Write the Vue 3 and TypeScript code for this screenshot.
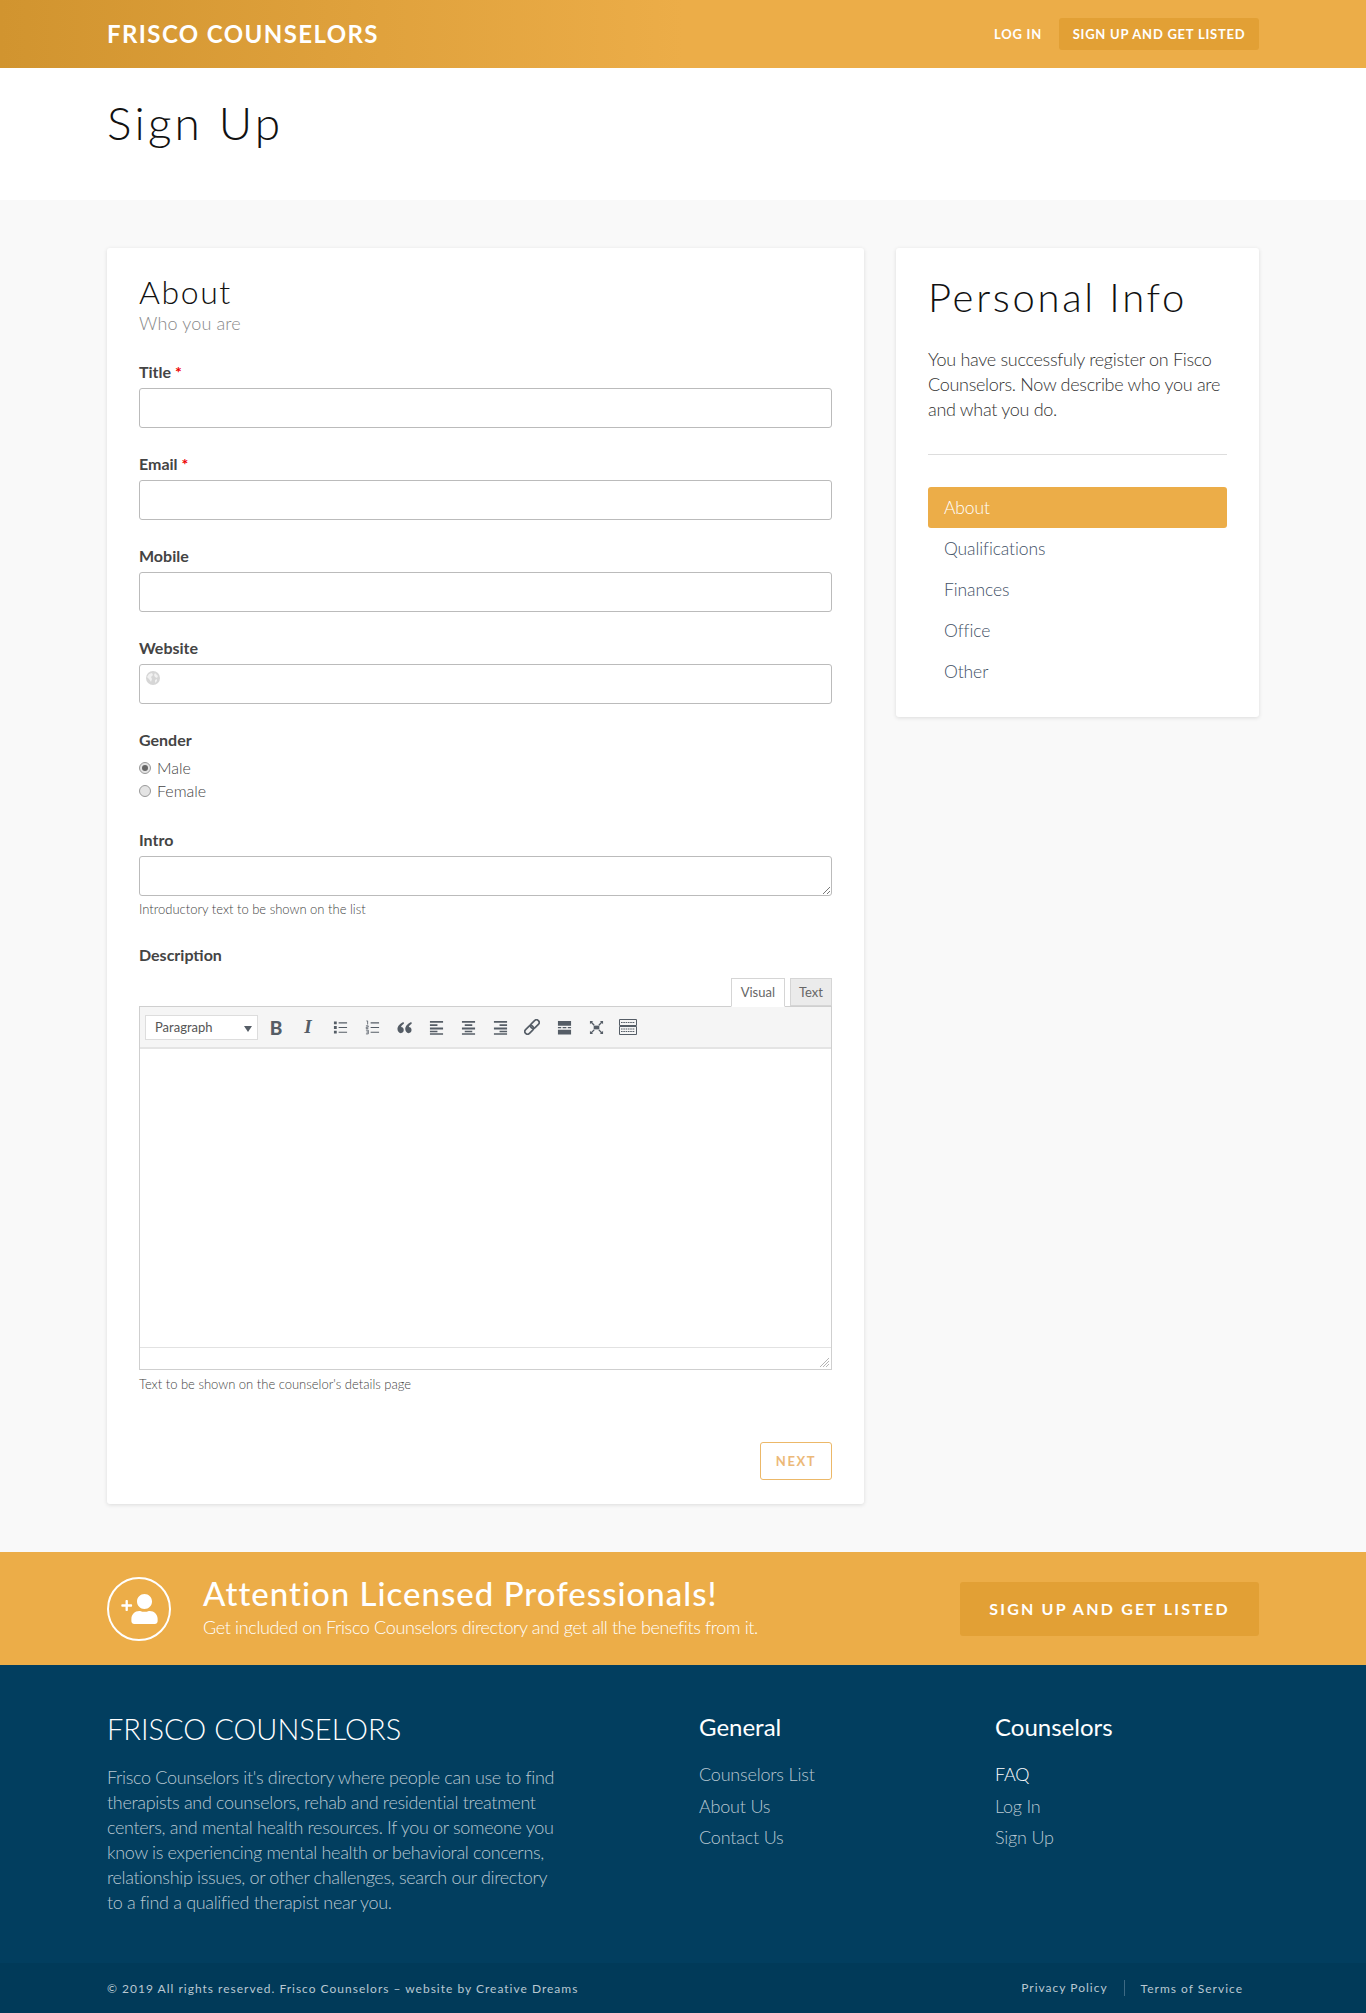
<template>
  <div class="page">
    <header class="topbar">
      <div class="wrap topbar-inner">
        <a class="brand">FRISCO COUNSELORS</a>
        <nav class="topnav">
          <a class="login">LOG IN</a>
          <a class="listed">SIGN UP AND GET LISTED</a>
        </nav>
      </div>
    </header>

    <section class="title-band">
      <div class="wrap"><h1>Sign Up</h1></div>
    </section>

    <main class="content">
      <div class="wrap columns">
        <form class="card form-card" @submit.prevent>
          <h2>About</h2>
          <p class="sub">Who you are</p>

          <div v-for="f in fields" :key="f.label" class="field">
            <label>{{ f.label }} <span v-if="f.required" class="req">*</span></label>
            <div class="input">
              <svg v-if="f.globe" class="globe" viewBox="0 0 14 14">
                <circle cx="7" cy="7" r="7" fill="#d6d6d6" />
                <path d="M3 3l3-1 1 2-2 2 1 2-1 3-2-3-2-2zM9 2l3 3-1 2-2-1-1-2zM9 9l2-1 0 2-2 2z" fill="#f1f1f1" />
              </svg>
            </div>
          </div>

          <div class="field gender">
            <label>Gender</label>
            <div class="radio first"><span class="dot on" />Male</div>
            <div class="radio"><span class="dot" />Female</div>
          </div>

          <div class="field intro">
            <label>Intro</label>
            <div class="input">
              <svg class="grip" viewBox="0 0 8 8"><path d="M8 1L1 8M8 5L5 8" stroke="#777" fill="none" /></svg>
            </div>
            <p class="hint">Introductory text to be shown on the list</p>
          </div>

          <div class="field desc">
            <label>Description</label>
            <div class="tabs">
              <span class="tab active">Visual</span>
              <span class="tab">Text</span>
            </div>
            <div class="editor">
              <div class="toolbar">
                <div class="select">Paragraph<i class="caret" /></div>
                <span class="tool"><span class="t-b">B</span></span>
                <span class="tool"><span class="t-i">I</span></span>
                <span class="tool">
                  <svg viewBox="0 0 16 16" class="ico"><path d="M1 1.500h3v3H1zM1 6.500h3v3H1zM1 11.500h3v3H1z" fill="#555d66" /><path d="M6 3h9M6 8h9M6 13h9" stroke="#555d66" stroke-width="1.200" /></svg>
                </span>
                <span class="tool">
                  <svg viewBox="0 0 16 16" class="ico"><path d="M1.500 1h1.300v3.800M1 6.200h2.400v1.500H1.300v1.500h2.300M1 10.800h2.500v4H1M1.500 12.800h2" stroke="#555d66" stroke-width=".9" fill="none" /><path d="M6 3h9M6 8h9M6 13h9" stroke="#555d66" stroke-width="1.200" /></svg>
                </span>
                <span class="tool">
                  <svg viewBox="0 0 16 16" class="ico"><path d="M7 2C3.500 3.500.5 6.200.5 9.700.5 12 2 14 4 14s3.200-1.500 3.200-3.300S6 7.500 4.300 7.500C4.700 6 5.800 5 7.400 4zM15.300 2C11.800 3.500 8.800 6.200 8.800 9.700c0 2.300 1.500 4.300 3.500 4.300s3.200-1.500 3.200-3.300-1.200-3.200-2.900-3.200c.4-1.500 1.500-2.500 3.100-3.500z" fill="#555d66" /></svg>
                </span>
                <span class="tool">
                  <svg viewBox="0 0 16 16" class="ico"><path d="M1 1h14v2H1zM1 4.500h8v2H1zM1 8h14v2H1zM1 11.500h8v1.500H1zM1 14h14v1.800H1z" fill="#555d66" /></svg>
                </span>
                <span class="tool">
                  <svg viewBox="0 0 16 16" class="ico"><path d="M1 1h14v2H1zM4 4.500h8v2H4zM1 8h14v2H1zM4 11.500h8v1.500H4zM1 14h14v1.800H1z" fill="#555d66" /></svg>
                </span>
                <span class="tool">
                  <svg viewBox="0 0 16 16" class="ico"><path d="M1 1h14v2H1zM7 4.500h8v2H7zM1 8h14v2H1zM7 11.500h8v1.500H7zM1 14h14v1.800H1z" fill="#555d66" /></svg>
                </span>
                <span class="tool">
                  <svg viewBox="0 0 16 16" class="ico link">
                    <g transform="rotate(-45 8 8)" fill="none" stroke="#555d66" stroke-width="1.700">
                      <rect x="-1" y="5.300" width="10" height="5.400" rx="2.700" />
                      <rect x="7" y="5.300" width="10" height="5.400" rx="2.700" />
                    </g>
                  </svg>
                </span>
                <span class="tool">
                  <svg viewBox="0 0 16 16" class="ico"><path d="M1 1h14v5H1zM1 10.500h14v5H1z" fill="#555d66" /><path d="M1 8.200h3.500M6 8.200h4M11.500 8.200H15" stroke="#555d66" stroke-width="1.300" /></svg>
                </span>
                <span class="tool">
                  <svg viewBox="0 0 16 16" class="ico"><path d="M5 6h6v4H5z" fill="#555d66" /><path d="M1 1h3.500L3.300 2.200 6 5 5 6 2.200 3.300 1 4.500zM15 1v3.500l-1.200-1.200L11 6l-1-1 2.800-2.800L11.500 1zM1 15v-3.500l1.200 1.200L5 10l1 1-2.800 2.800L4.500 15zM15 15h-3.500l1.200-1.200L10 11l1-1 2.800 2.800 1.200-1.300z" fill="#555d66" /></svg>
                </span>
                <span class="tool">
                  <svg viewBox="0 0 18 16" class="ico kb"><path d="M.5.500h17v6H.5zM.5 7.500h17v8H.5z" fill="none" stroke="#555d66" /><path d="M2 3.500h14M2 10h14M2 12.500h14" stroke="#555d66" stroke-width="1.200" stroke-dasharray="1.600 .7" /></svg>
                </span>
              </div>
              <div class="edit-area" />
              <div class="statusbar">
                <svg class="resize" viewBox="0 0 10 10"><path d="M10 1L1 10M10 4L4 10M10 7L7 10" stroke="#b5b5b5" fill="none" /></svg>
              </div>
            </div>
            <p class="hint">Text to be shown on the counselor's details page</p>
          </div>

          <div class="actions"><button type="button" class="next">NEXT</button></div>
        </form>

        <aside class="card side-card">
          <h2>Personal Info</h2>
          <p class="lead">You have successfuly register on Fisco Counselors. Now describe who you are and what you do.</p>
          <hr />
          <ul>
            <li v-for="(s, i) in steps" :key="s" :class="{ active: i === 0 }">{{ s }}</li>
          </ul>
        </aside>
      </div>
    </main>

    <section class="cta">
      <div class="wrap cta-inner">
        <div class="cta-icon">
          <svg viewBox="0 0 640 512" width="38" height="30">
            <path fill="#fff" d="M224 256c70.700 0 128-57.300 128-128S294.700 0 224 0 96 57.300 96 128s57.300 128 128 128zm89.600 32h-16.700c-22.200 10.200-46.900 16-72.900 16s-50.600-5.800-72.900-16h-16.700C60.200 288 0 348.200 0 422.400V464c0 26.500 21.500 48 48 48h352c26.500 0 48-21.500 48-48v-41.600c0-74.200-60.200-134.400-134.400-134.400z" transform="translate(190 0)" />
            <path fill="#fff" d="M190 176h-60v-60c0-6.600-5.400-12-12-12h-16c-6.600 0-12 5.400-12 12v60H30c-6.600 0-12 5.400-12 12v16c0 6.600 5.400 12 12 12h60v60c0 6.600 5.400 12 12 12h16c6.600 0 12-5.400 12-12v-60h60c6.600 0 12-5.400 12-12v-16c0-6.600-5.400-12-12-12z" />
          </svg>
        </div>
        <div class="cta-text">
          <h3>Attention Licensed Professionals!</h3>
          <p>Get included on Frisco Counselors directory and get all the benefits from it.</p>
        </div>
        <a class="cta-btn">SIGN UP AND GET LISTED</a>
      </div>
    </section>

    <footer class="footer">
      <div class="wrap footer-main">
        <div class="f-about">
          <h4>FRISCO COUNSELORS</h4>
          <p>Frisco Counselors it's directory where people can use to find therapists and counselors, rehab and residential treatment centers, and mental health resources. If you or someone you know is experiencing mental health or behavioral concerns, relationship issues, or other challenges, search our directory to a find a qualified therapist near you.</p>
        </div>
        <div class="f-col">
          <h5>General</h5>
          <a v-for="l in generalLinks" :key="l">{{ l }}</a>
        </div>
        <div class="f-col last">
          <h5>Counselors</h5>
          <a v-for="(l, i) in counselorLinks" :key="l" :class="{ lit: i === 0 }">{{ l }}</a>
        </div>
      </div>
      <div class="footer-bottom">
        <div class="wrap bottom-inner">
          <span>© 2019 All rights reserved. Frisco Counselors – website by Creative Dreams</span>
          <span class="legal"><a>Privacy Policy</a><a>Terms of Service</a></span>
        </div>
      </div>
    </footer>
  </div>
</template>

<script setup lang="ts">
interface Field {
  label: string
  required?: boolean
  globe?: boolean
}

const fields: Field[] = [
  { label: 'Title', required: true },
  { label: 'Email', required: true },
  { label: 'Mobile' },
  { label: 'Website', globe: true }
]

const steps = ['About', 'Qualifications', 'Finances', 'Office', 'Other']
const generalLinks = ['Counselors List', 'About Us', 'Contact Us']
const counselorLinks = ['FAQ', 'Log In', 'Sign Up']
</script>

<style>
body {
  margin: 0;
}
</style>

<style scoped>
.page {
  font-family: 'Lato', 'Noto Sans', sans-serif;
  background: #f9f9f9;
  color: #444;
}

.wrap {
  width: 1152px;
  margin: 0 auto;
}

.topbar {
  height: 68px;
  background: linear-gradient(90deg, #d1942f 0%, #ecad48 50%);
}

.topbar-inner {
  height: 68px;
  display: flex;
  align-items: center;
  justify-content: space-between;
}

.brand {
  font-size: 24px;
  font-weight: 700;
  color: #fff;
  letter-spacing: 1.400px;
  padding-bottom: 2px;
}

.topnav {
  display: flex;
  align-items: center;
}

.login,
.listed {
  font-size: 13px;
  font-weight: 700;
  color: #fff;
  letter-spacing: 0.750px;
}

.login {
  margin-right: 17px;
}

.listed {
  width: 200px;
  text-align: center;
  height: 32px;
  line-height: 32px;
  background: #e2a035;
  border-radius: 3px;
}

.title-band {
  height: 132px;
  background: #fff;
}

h1 {
  margin: 0;
  padding-top: 30px;
  font-size: 46px;
  line-height: 50px;
  font-weight: 300;
  letter-spacing: 3.200px;
  color: #111;
}

.content {
  padding: 48px 0;
}

.columns {
  display: flex;
  align-items: flex-start;
  gap: 32px;
}

.card {
  background: #fff;
  border-radius: 3px;
  box-shadow: 0 1px 4px rgba(0, 0, 0, 0.12);
  box-sizing: border-box;
}

.form-card {
  width: 757px;
  padding: 26px 32px 24px;
}

h2 {
  margin: 0;
  font-weight: 300;
  color: #111;
}

.form-card h2 {
  font-size: 32px;
  line-height: 36px;
  letter-spacing: 1.600px;
}

.sub {
  margin: 1px 0 25px;
  font-size: 18px;
  line-height: 24px;
  font-weight: 300;
  letter-spacing: 0.150px;
  color: #888;
}

.field {
  margin-bottom: 24px;
}

label {
  display: block;
  font-size: 16px;
  line-height: 24px;
  font-weight: 700;
  color: #444;
}

.req {
  color: #e00;
}

.input {
  position: relative;
  height: 40px;
  margin-top: 4px;
  box-sizing: border-box;
  background: #fff;
  border: 1px solid #bbb;
  border-radius: 3px;
}

.globe {
  position: absolute;
  left: 6px;
  top: 6px;
  width: 14px;
  height: 14px;
}

.grip {
  position: absolute;
  right: 1px;
  bottom: 1px;
  width: 8px;
  height: 8px;
}

.gender {
  margin-bottom: 26px;
}

.radio {
  display: flex;
  align-items: center;
  height: 23px;
  font-size: 16px;
  font-weight: 300;
  color: #444;
}

.radio.first {
  margin-top: 4px;
}

.dot {
  width: 10px;
  height: 10px;
  margin-right: 6px;
  border: 1px solid #999;
  border-radius: 50%;
  background: #e4e4e4;
  position: relative;
}

.dot.on::after {
  content: '';
  position: absolute;
  left: 2px;
  top: 2px;
  width: 6px;
  height: 6px;
  border-radius: 50%;
  background: #666;
}

.hint {
  margin: 4px 0 0;
  font-size: 13px;
  line-height: 18px;
  font-weight: 300;
  color: #444;
}

.intro {
  margin-bottom: 25px;
}

.desc {
  margin-bottom: 0;
}

.desc .hint {
  margin-top: 5px;
}

.tabs {
  display: flex;
  justify-content: flex-end;
  gap: 5px;
  margin-top: 11px;
  height: 29px;
  position: relative;
  z-index: 1;
  margin-bottom: -1px;
}

.tab {
  box-sizing: border-box;
  padding: 0 8px;
  height: 28px;
  line-height: 26px;
  font-size: 13px;
  font-weight: 400;
  color: #666;
  background: #ebebeb;
  border: 1px solid #d5d5d5;
}

.tab.active {
  height: 29px;
  padding: 0 9px;
  background: #fff;
  border-bottom-color: #fff;
}

.editor {
  border: 1px solid #cfcfcf;
}

.toolbar {
  display: flex;
  align-items: center;
  height: 42px;
  box-sizing: border-box;
  padding: 0 5px;
  background: #f5f5f5;
  border-bottom: 2px solid #e4e4e4;
}

.select {
  position: relative;
  box-sizing: border-box;
  width: 113px;
  height: 25px;
  line-height: 22px;
  padding-left: 9px;
  margin-right: 2px;
  font-size: 13px;
  color: #555;
  background: #fff;
  border: 1px solid #ddd;
}

.caret {
  position: absolute;
  right: 5px;
  top: 10px;
  border-left: 4px solid transparent;
  border-right: 4px solid transparent;
  border-top: 6px solid #555d66;
}

.tool {
  width: 32px;
  display: flex;
  align-items: center;
  justify-content: center;
  color: #555d66;
}

.ico {
  width: 15px;
  height: 15px;
}

.ico.link {
  width: 16px;
  height: 16px;
}

.ico.kb {
  width: 18px;
  height: 16px;
}

.t-b {
  font-size: 19px;
  font-weight: 900;
}

.t-i {
  font-family: 'Liberation Serif', serif;
  font-size: 19px;
  font-weight: 700;
  font-style: italic;
}

.edit-area {
  height: 298px;
  background: #fff;
}

.statusbar {
  position: relative;
  height: 21px;
  border-top: 1px solid #e2e2e2;
  background: #fff;
}

.resize {
  position: absolute;
  right: 2px;
  bottom: 2px;
  width: 10px;
  height: 10px;
}

.actions {
  display: flex;
  justify-content: flex-end;
  margin-top: 49px;
}

.next {
  box-sizing: border-box;
  width: 72px;
  height: 38px;
  font-family: inherit;
  font-size: 13px;
  font-weight: 700;
  letter-spacing: 1.600px;
  color: #ecb978;
  background: #fff;
  border: 1px solid #ecb868;
  border-radius: 3px;
}

.side-card {
  width: 363px;
  padding: 26px 32px 25px;
}

.side-card h2 {
  font-size: 40px;
  line-height: 46px;
  letter-spacing: 2.700px;
  margin-bottom: 27px;
}

.lead {
  margin: 0;
  font-size: 18px;
  line-height: 25px;
  font-weight: 300;
  letter-spacing: -0.300px;
  color: #333;
}

hr {
  border: 0;
  border-top: 1px solid #ddd;
  margin: 32px 0;
}

ul {
  list-style: none;
  margin: 0;
  padding: 0;
}

li {
  height: 41px;
  line-height: 41px;
  padding-left: 16px;
  font-size: 17.500px;
  font-weight: 300;
  letter-spacing: -0.100px;
  color: #3f5166;
  border-radius: 3px;
}

li.active {
  background: #ecad48;
  color: #fff;
}

.cta {
  height: 113px;
  background: #ecad48;
  color: #fff;
}

.cta-inner {
  height: 113px;
  display: flex;
  align-items: center;
}

.cta-icon {
  box-sizing: border-box;
  width: 64px;
  height: 64px;
  margin-right: 32px;
  display: flex;
  align-items: center;
  justify-content: center;
  border: 2px solid #fff;
  border-radius: 50%;
}

.cta-text {
  flex: 1;
  padding-bottom: 4px;
}

h3 {
  margin: 0 0 4px;
  font-size: 33px;
  line-height: 36px;
  font-weight: 500;
  letter-spacing: 1px;
}

.cta-text p {
  margin: 0;
  font-size: 18px;
  line-height: 24px;
  font-weight: 300;
  letter-spacing: -0.360px;
}

.cta-btn {
  width: 299px;
  height: 54px;
  line-height: 54px;
  text-align: center;
  background: #e2a035;
  border-radius: 3px;
  font-size: 16px;
  font-weight: 700;
  letter-spacing: 2.200px;
}

.footer {
  background: #023e5f;
  height: 348px;
  display: flex;
  flex-direction: column;
}

.footer-main {
  flex: 1;
  display: flex;
  box-sizing: border-box;
  padding-top: 46px;
}

.f-about {
  flex: none;
  width: 592px;
}

h4 {
  margin: 0 0 18px;
  font-size: 29px;
  line-height: 36px;
  font-weight: 300;
  color: #fff;
}

.f-about p {
  margin: 0;
  width: 452px;
  font-size: 18px;
  line-height: 25px;
  font-weight: 300;
  letter-spacing: -0.330px;
  color: #b9c8d2;
}

.f-col {
  flex: none;
  width: 296px;
  display: flex;
  flex-direction: column;
}

.f-col.last {
  width: 264px;
}

h5 {
  margin: 0 0 16px;
  font-size: 24px;
  line-height: 32px;
  font-weight: 400;
  color: #fff;
}

.f-col a {
  font-size: 18px;
  line-height: 31.500px;
  font-weight: 300;
  letter-spacing: -0.200px;
  color: #b9c8d2;
}

.f-col a.lit {
  color: #fff;
}

.footer-bottom {
  height: 50px;
  background: #013a59;
  font-size: 12px;
  letter-spacing: 1px;
  color: #b9c8d2;
}

.bottom-inner {
  height: 50px;
  display: flex;
  align-items: center;
  justify-content: space-between;
}

.legal {
  display: flex;
  align-items: center;
  padding-right: 16px;
}

.legal a:first-child {
  padding-right: 16px;
  border-right: 1px solid #3e6a84;
  margin-right: 16px;
  line-height: 16px;
}
</style>
